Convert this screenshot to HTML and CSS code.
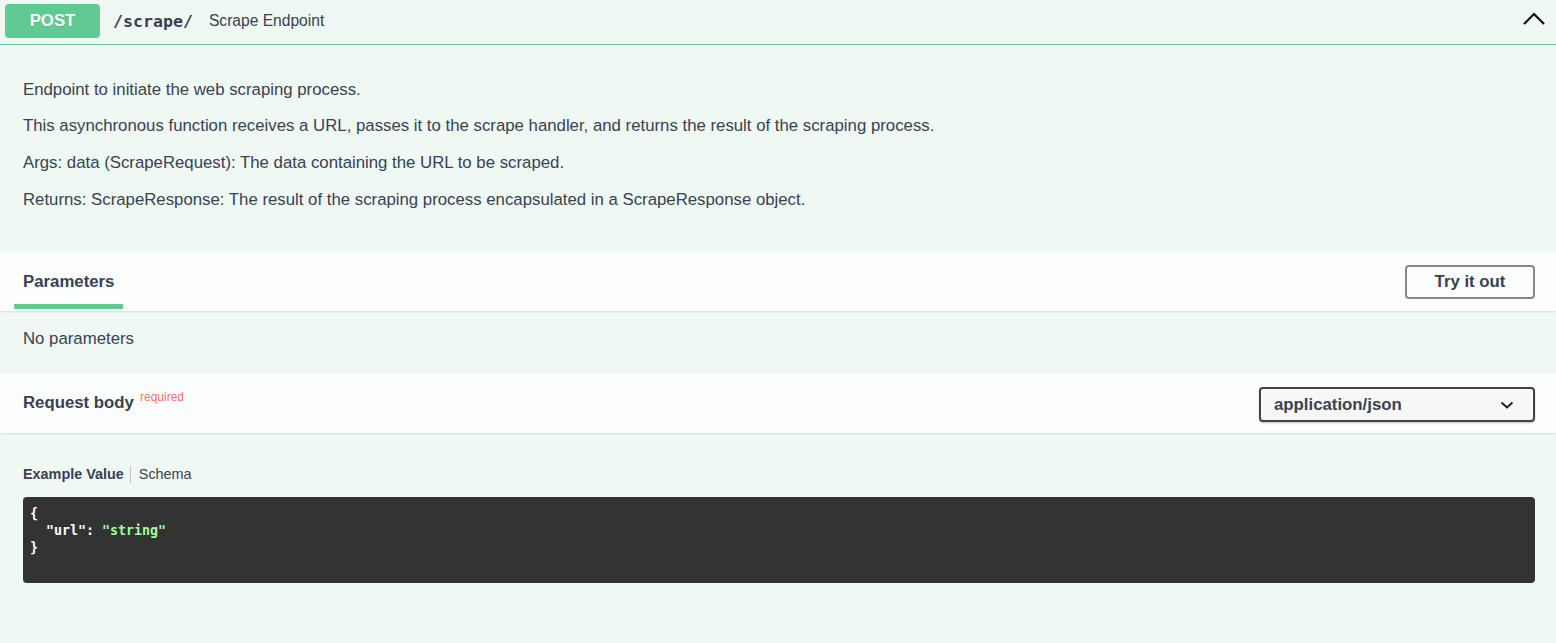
FILE: index.html
```html
<!DOCTYPE html>
<html lang="en">
<head>
<meta charset="utf-8">
<title>POST /scrape/</title>
<link rel="stylesheet" href="styles.css">
</head>
<body>
<div class="opblock">
  <div class="summary">
    <span class="method">POST</span>
    <span class="path">/scrape/</span>
    <span class="summary-desc">Scrape Endpoint</span>
    <svg class="arrow" viewBox="0 0 24 24" width="24" height="24" aria-hidden="true">
      <polyline points="2,17 12,7 22,17" fill="none" stroke="#111" stroke-width="2.2"/>
    </svg>
  </div>

  <div class="desc">
    <p>Endpoint to initiate the web scraping process.</p>
    <p>This asynchronous function receives a URL, passes it to the scrape handler, and returns the result of the scraping process.</p>
    <p>Args: data (ScrapeRequest): The data containing the URL to be scraped.</p>
    <p>Returns: ScrapeResponse: The result of the scraping process encapsulated in a ScrapeResponse object.</p>
  </div>

  <div class="section-header">
    <h4 class="tab-title"><span class="tab-label">Parameters</span></h4>
    <button class="btn" type="button">Try it out</button>
  </div>

  <div class="params">
    <p>No parameters</p>
  </div>

  <div class="section-header">
    <h4 class="title">Request body<span class="required">required</span></h4>
    <div class="select">
      <span>application/json</span>
      <svg class="chev" viewBox="0 0 14 8" width="14" height="8" aria-hidden="true">
        <polyline points="1.5,1.5 7,6.5 12.5,1.5" fill="none" stroke="#222" stroke-width="2"/>
      </svg>
    </div>
  </div>

  <div class="body">
    <ul class="tabs">
      <li class="tab active">Example Value</li>
      <li class="tab">Schema</li>
    </ul>
    <pre class="code">{
  "url": <span class="str">"string"</span>
}</pre>
  </div>
</div>
</body>
</html>
```

FILE: styles.css
```css
html, body {
  margin: 0;
  padding: 0;
}

body {
  background: #eef9f4;
  font-family: "Liberation Sans", Arial, sans-serif;
  color: #3b4151;
  min-height: 643px;
}

.opblock {
  display: flex;
  flex-direction: column;
}

/* summary bar */
.summary {
  display: flex;
  align-items: center;
  height: 45px;
  padding: 0 5px;
  border-bottom: 1px solid #61c992;
  box-sizing: border-box;
}

.method {
  display: flex;
  align-items: center;
  justify-content: center;
  width: 95px;
  height: 34px;
  margin-top: -3px;
  background: #61c992;
  border-radius: 4px;
  color: #fff;
  font-weight: 700;
  font-size: 16.8px;
  text-shadow: 0 1px 0 rgba(0, 0, 0, 0.1);
}

.path {
  margin-left: 13px;
  margin-top: -2px;
  font-family: "DejaVu Sans Mono", "Liberation Mono", monospace;
  font-weight: 700;
  font-size: 16.6px;
  color: #3b4151;
}

.summary-desc {
  margin-left: 16px;
  margin-top: -3px;
  font-size: 15.6px;
  color: #3b4151;
}

.arrow {
  margin-left: auto;
  margin-right: 5px;
  margin-top: -6px;
}

/* description */
.desc {
  padding: 17px 23px 25px;
}

.desc p {
  margin: 17.67px 0;
  font-size: 16.8px;
  line-height: 19px;
}

/* section headers */
.section-header {
  display: flex;
  align-items: center;
  justify-content: space-between;
  height: 60px;
  padding: 0 21px 0 23px;
  background: rgba(255, 255, 255, 0.8);
  box-shadow: 0 1px 2px rgba(0, 0, 0, 0.1);
  position: relative;
}

.tab-title,
.title {
  margin: 0;
  font-size: 16.8px;
  font-weight: 700;
  line-height: 19px;
  color: #3b4151;
}

.tab-label {
  position: relative;
  display: inline-block;
}

.tab-label::after {
  content: "";
  position: absolute;
  left: 50%;
  transform: translateX(-50%);
  top: calc(100% + 13px);
  width: 120%;
  height: 5px;
  background: #61c992;
}

.btn {
  width: 130px;
  height: 34px;
  margin-top: 1px;
  border: 2px solid #888;
  border-radius: 4px;
  background: transparent;
  font-family: "Liberation Sans", Arial, sans-serif;
  font-weight: 700;
  font-size: 16.8px;
  color: #3b4151;
  box-sizing: border-box;
  padding: 0;
}

.params {
  padding: 18px 23px 25px;
}

.params p {
  margin: 0;
  font-size: 16.8px;
  line-height: 19px;
}

.required {
  position: relative;
  top: -7px;
  padding-left: 6px;
  font-size: 12px;
  font-weight: 400;
  color: rgba(255, 0, 0, 0.6);
}

.select {
  display: flex;
  align-items: center;
  justify-content: space-between;
  width: 276px;
  height: 35px;
  margin-top: 3px;
  padding: 0 19px 0 13px;
  box-sizing: border-box;
  border: 2px solid #41444e;
  border-radius: 4px;
  background: #f7f7f7;
  box-shadow: 0 1px 2px rgba(0, 0, 0, 0.25);
  font-weight: 700;
  font-size: 16.8px;
  color: #3b4151;
}

.chev {
  margin-top: 1px;
}

/* request body */
.body {
  padding: 33px 21px 40px 23px;
}

.tabs {
  display: flex;
  margin: 0;
  padding: 0;
  list-style: none;
}

.tab {
  font-size: 14.4px;
  line-height: 17px;
  color: #3b4151;
}

.tab.active {
  font-weight: 700;
  padding-right: 6px;
  margin-right: 8px;
  border-right: 1px solid rgba(0, 0, 0, 0.2);
}

.code {
  margin: 14px 0 0;
  padding: 8px 7px 27px;
  background: #333;
  border-radius: 4px;
  color: #fff;
  font-family: "DejaVu Sans Mono", "Liberation Mono", monospace;
  font-weight: 700;
  font-size: 13.3px;
  line-height: 17px;
}

.str {
  color: #a2fca2;
}
```
